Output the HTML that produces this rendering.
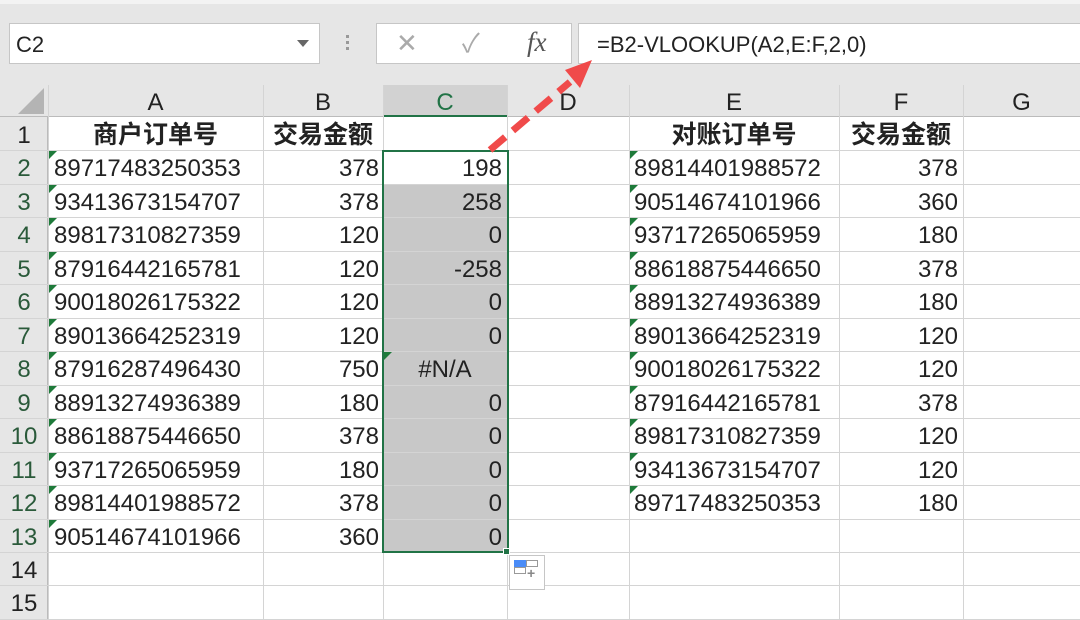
<!DOCTYPE html>
<html><head><meta charset="utf-8"><style>
*{margin:0;padding:0;box-sizing:border-box}
body{width:1080px;height:620px;overflow:hidden;background:#fff;font-family:"Liberation Sans","Noto Sans CJK SC",sans-serif;position:relative;color:#222}
.tb{position:absolute;left:0;top:0;width:1080px;height:85px;background:#e6e6e6;border-top:4px solid #f3f3f3}
.box{position:absolute;background:#fff;border:1px solid #c6c6c6}
.c{position:absolute;font-size:24px;line-height:33px;white-space:nowrap}
.hl{position:absolute;height:1px;background:#d4d4d4;left:0;width:1080px}
.vl{position:absolute;width:1px;background:#d4d4d4;top:85px;height:535px}
.tri{position:absolute;width:0;height:0;border-top:8px solid #1e7a3a;border-right:8px solid transparent}
</style></head><body>
<div class="tb"></div>
<div class="box" style="left:9px;top:23px;width:311px;height:41px"></div>
<div class="c" style="left:16px;top:28px;font-size:22px">C2</div>
<div style="position:absolute;left:297px;top:40px;border-left:6px solid transparent;border-right:6px solid transparent;border-top:7px solid #666"></div>
<div style="position:absolute;left:346px;top:35px;width:3px;height:18px;background:repeating-linear-gradient(#999 0 3px,transparent 3px 6px)"></div>
<div class="box" style="left:376px;top:23px;width:196px;height:41px"></div>
<div class="box" style="left:578px;top:23px;width:520px;height:41px"></div>
<div class="c" style="left:396px;top:27px;color:#aaa;font-size:26px">✕</div>
<div class="c" style="left:462px;top:27px;color:#aaa;font-size:26px">✓</div>
<div class="c" style="left:527px;top:26px;font-family:'Liberation Serif',serif;font-style:italic;color:#555;font-size:27px">fx</div>
<div class="c" style="left:597px;top:28px;font-size:22px">=B2-VLOOKUP(A2,E:F,2,0)</div>
<div style="position:absolute;left:0;top:85px;width:1080px;height:32px;background:#e6e6e6;border-bottom:1px solid #bbb"></div>
<div style="position:absolute;left:0;top:117px;width:48px;height:503px;background:#e6e6e6;border-right:1px solid #bbb"></div>
<div style="position:absolute;left:18px;top:88px;width:0;height:0;border-left:26px solid transparent;border-bottom:26px solid #b4b4b4"></div>
<div style="position:absolute;left:383px;top:85px;width:124px;height:32px;background:#d2d2d2;border-bottom:2px solid #217346"></div>
<div style="position:absolute;left:383px;top:184px;width:124px;height:368px;background:#c8c8c8"></div>
<div id="g"></div>
<div style="position:absolute;left:382px;top:150px;width:127px;height:403px;border:2px solid #217346"></div>
<div style="position:absolute;left:503px;top:548px;width:7px;height:7px;background:#217346;border:1px solid #fff"></div>
<div style="position:absolute;left:509px;top:555px;width:36px;height:35px;border:1px solid #c6c6c6;background:#fff"></div>
<div style="position:absolute;left:514px;top:560px;width:12px;height:7px;background:#4a8cf7"></div>
<div style="position:absolute;left:526px;top:560px;width:12px;height:7px;border:1px solid #999"></div>
<div style="position:absolute;left:514px;top:567px;width:12px;height:7px;border:1px solid #999"></div>
<div class="c" style="left:527px;top:566px;font-size:14px;line-height:14px;color:#888;font-weight:bold">+</div>
<svg style="position:absolute;left:0;top:0" width="1080" height="620">
<line x1="490" y1="150" x2="570" y2="82" stroke="#f04a4a" stroke-width="7" stroke-dasharray="20,10"/>
<polygon points="592,60 565,70 580,88" fill="#f04a4a"/>
</svg>
<script>
var g=document.getElementById('g'),h='';
var cols=[0,48,263,383,507,629,839,963,1080],L="ABCDEFG";
for(var i=1;i<cols.length-1;i++)h+='<div class="vl" style="left:'+cols[i]+'px"></div>';
for(var r=0;r<15;r++)h+='<div class="hl" style="top:'+Math.round(117+33.46*(r+1))+'px"></div>';
for(var i=0;i<7;i++)h+='<div class="c" style="left:'+cols[i+1]+'px;width:'+(cols[i+2]-cols[i+1])+'px;text-align:center;top:86px;line-height:33px;'+(i==2?'color:#217346':'')+'">'+L[i]+'</div>';
for(var r=0;r<15;r++)h+='<div class="c" style="left:0;width:48px;text-align:center;top:'+(Math.round(117+33.46*r)+2)+'px;'+(r>=1&&r<=12?'color:#2a5a3a':'')+'">'+(r+1)+'</div>';
var A=[["89717483250353",378,"198"],["93413673154707",378,"258"],["89817310827359",120,"0"],["87916442165781",120,"-258"],["90018026175322",120,"0"],["89013664252319",120,"0"],["87916287496430",750,"#N/A"],["88913274936389",180,"0"],["88618875446650",378,"0"],["93717265065959",180,"0"],["89814401988572",378,"0"],["90514674101966",360,"0"]];
var E=[["89814401988572",378],["90514674101966",360],["93717265065959",180],["88618875446650",378],["88913274936389",180],["89013664252319",120],["90018026175322",120],["87916442165781",378],["89817310827359",120],["93413673154707",120],["89717483250353",180]];
function cell(x,w,r,t,al,b){return '<div class="c" style="left:'+x+'px;width:'+w+'px;text-align:'+al+';top:'+(Math.round(117+33.46*r)+2)+'px;'+(b?'font-weight:bold;font-size:25px;':'')+'">'+t+'</div>';}
h+=cell(48,215,0,"商户订单号","center",1)+cell(263,120,0,"交易金额","center",1)+cell(629,210,0,"对账订单号","center",1)+cell(839,124,0,"交易金额","center",1);
A.forEach(function(a,i){var r=i+1,y=Math.round(117+33.46*r);
h+='<div class="tri" style="left:49px;top:'+(y+1)+'px"></div>';
h+=cell(54,205,r,a[0],"left")+cell(263,116,r,a[1],"right");
if(a[2]=="#N/A"){h+='<div class="tri" style="left:384px;top:'+(y+1)+'px"></div>'+cell(383,124,r,a[2],"center");}
else h+=cell(383,119,r,a[2],"right");});
E.forEach(function(a,i){var r=i+1,y=Math.round(117+33.46*r);
h+='<div class="tri" style="left:630px;top:'+(y+1)+'px"></div>';
h+=cell(634,205,r,a[0],"left")+cell(839,119,r,a[1],"right");});
g.innerHTML=h;
</script>
</body></html>
